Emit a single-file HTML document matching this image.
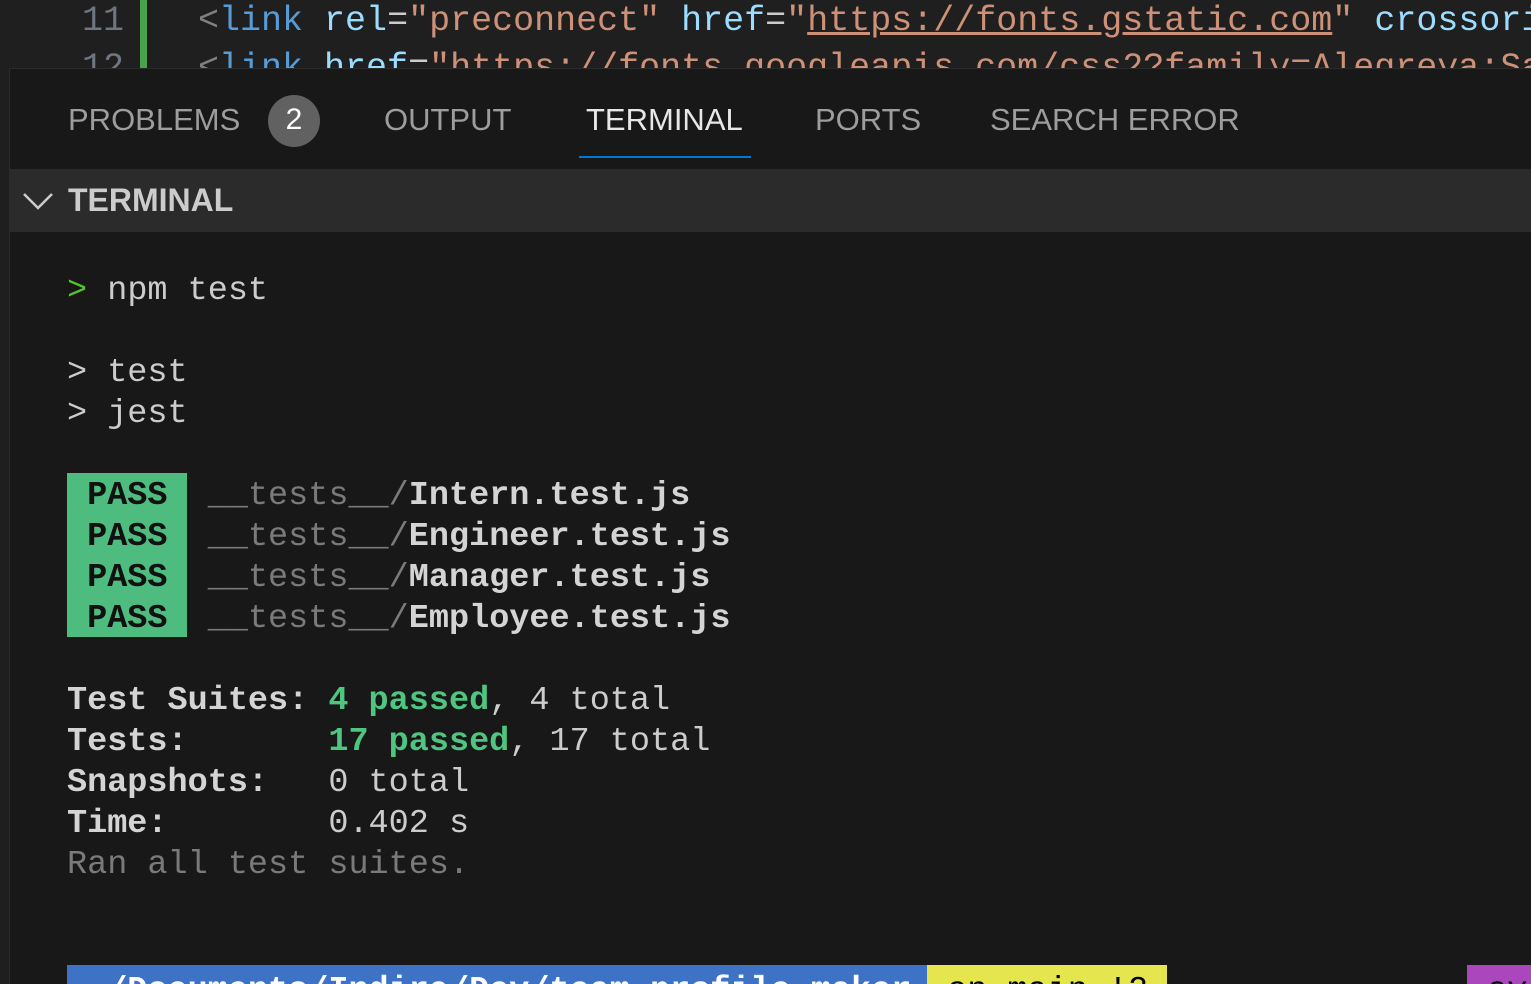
<!DOCTYPE html><html style="overflow:hidden"><head><style>
body{margin:0;width:1531px;height:984px;overflow:hidden;background:#181818;position:relative;font-family:"Liberation Mono",monospace;}
.m{font-family:"Liberation Mono",monospace;font-size:33.5px;white-space:pre;position:absolute;left:67px;line-height:41px;color:#cccccc}
.s{font-family:"Liberation Sans",sans-serif;position:absolute}
.g{color:#4fc57f;font-weight:bold}
.b{font-weight:bold;color:#d4d4d4}
.d{color:#7a7a7a}
.p{color:#111;font-weight:bold}
</style></head><body>
<div style="position:absolute;left:0;top:0;width:1531px;height:68px;background:#1f1f1f;overflow:hidden">
<div style="position:absolute;left:140px;top:0;width:7px;height:68px;background:#4aa34a"></div>
<div class="m" style="left:82px;top:1px;color:#6e7681;font-size:35px">11</div>
<div class="m" style="left:198px;top:1px;font-size:35px"><span style="color:#808080">&lt;</span><span style="color:#569cd6">link</span> <span style="color:#9cdcfe">rel</span>=<span style="color:#ce9178">"preconnect"</span> <span style="color:#9cdcfe">href</span>=<span style="color:#ce9178">"<u>https://fonts.gstatic.com</u>"</span> <span style="color:#9cdcfe">crossorigin</span></div>
<div class="m" style="left:82px;top:48px;color:#6e7681;font-size:35px">12</div>
<div class="m" style="left:198px;top:48px;font-size:35px"><span style="color:#808080">&lt;</span><span style="color:#569cd6">link</span> <span style="color:#9cdcfe">href</span>=<span style="color:#ce9178">"https://fonts.googleapis.com/css2?family=Alegreya:Sa</span></div>
</div>
<div style="position:absolute;left:0;top:68px;width:9px;height:916px;background:#1f1f1f;border-right:1px solid #2b2b2b"></div>
<div style="position:absolute;left:9px;top:68px;width:1522px;height:1px;background:#2b2b2b"></div>
<div class="s" style="left:68px;top:102px;font-size:31px;color:#9d9d9d">PROBLEMS</div>
<div class="s" style="left:268px;top:95px;width:52px;height:52px;border-radius:26px;background:#616161;color:#fff;font-size:30px;text-align:center;line-height:50px">2</div>
<div class="s" style="left:384px;top:102px;font-size:31px;color:#9d9d9d">OUTPUT</div>
<div class="s" style="left:586px;top:102px;font-size:31px;color:#e7e7e7">TERMINAL</div>
<div style="position:absolute;left:579px;top:156px;width:172px;height:2px;background:#0078d4"></div>
<div class="s" style="left:815px;top:102px;font-size:31px;color:#9d9d9d">PORTS</div>
<div class="s" style="left:990px;top:102px;font-size:31px;color:#9d9d9d">SEARCH ERROR</div>
<div style="position:absolute;left:9px;top:169px;width:1522px;height:63px;background:#2b2b2b"></div>
<svg style="position:absolute;left:22px;top:190px" width="32" height="22"><path d="M2 4 L16 18 L30 4" stroke="#ccc" stroke-width="2.5" fill="none"/></svg>
<div class="s" style="left:68px;top:182px;font-size:32px;font-weight:bold;color:#cccccc">TERMINAL</div>
<div style="position:absolute;left:67px;top:473px;width:120px;height:164px;background:#4fbc7f"></div>
<div class="m" style="top:271px"><span style="color:#4fc52e">&gt;</span> npm test

&gt; test
&gt; jest

<span class="p"> PASS </span> <span class="d">__tests__/</span><span class="b">Intern.test.js</span>
<span class="p"> PASS </span> <span class="d">__tests__/</span><span class="b">Engineer.test.js</span>
<span class="p"> PASS </span> <span class="d">__tests__/</span><span class="b">Manager.test.js</span>
<span class="p"> PASS </span> <span class="d">__tests__/</span><span class="b">Employee.test.js</span>

<span class="b">Test Suites: </span><span class="g">4 passed</span>, 4 total
<span class="b">Tests:       </span><span class="g">17 passed</span>, 17 total
<span class="b">Snapshots:   </span>0 total
<span class="b">Time:        </span>0.402 s
<span class="d">Ran all test suites.</span></div>
<div style="position:absolute;left:0;top:965px;width:1531px;height:19px;overflow:hidden">
<div class="m" style="top:0;left:67px;width:860px;height:40px;background:#3d72c4;color:#fff;font-weight:bold;line-height:52px"> ~/Documents/Indira/Dev/team-profile-maker</div>
<div class="m" style="top:0;left:927px;width:240px;height:40px;background:#e5e54e;color:#000;line-height:52px"> on main !2</div>
<div class="m" style="top:0;left:1467px;width:80px;height:40px;background:#ab47bc;color:#000;line-height:52px"> sy</div>
</div>
</body></html>
